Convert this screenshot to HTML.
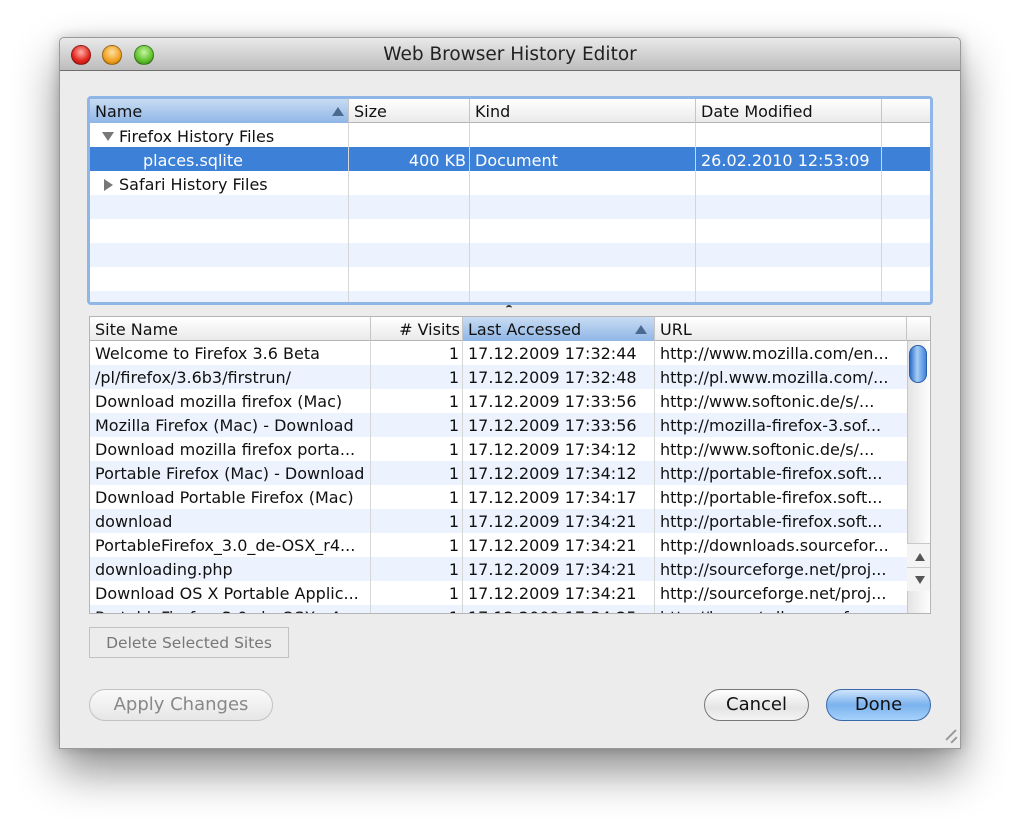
<!DOCTYPE html>
<html><head><meta charset="utf-8"><style>
*{box-sizing:border-box;margin:0;padding:0}
body{width:1020px;height:831px;background:#fff;font-family:"DejaVu Sans","Liberation Sans",sans-serif;font-size:16px;color:#111;position:relative;overflow:hidden}
.win{position:absolute;left:59px;top:37px;width:902px;height:712px;background:#ececec;border:1px solid #9a9a9a;border-radius:5px 5px 0 0;box-shadow:0 22px 45px rgba(0,0,0,.45),0 0 12px rgba(0,0,0,.2)}
.title{position:absolute;left:0;top:0;width:900px;height:33px;background:linear-gradient(#e9e9e9,#bdbdbd);border-bottom:1px solid #6e6e6e;border-radius:5px 5px 0 0;text-align:center;line-height:33px;font-size:18.5px;color:#222}
.dot{position:absolute;top:7px;width:20px;height:20px;border-radius:50%;border:1px solid rgba(0,0,0,.35)}
.a{position:absolute}
.tbl{position:absolute;background:#fff;overflow:hidden}
.hdr{position:absolute;left:0;top:0;height:24px;background:linear-gradient(#fff,#eaeaea);border-bottom:1px solid #b5b5b5;width:100%}
.hc{position:absolute;top:0;height:24px;line-height:25px;padding-left:5px;border-right:1px solid #c5c5c5;overflow:hidden;white-space:nowrap}
.sel{background:linear-gradient(#c8dcf3,#8fb6e6)}
.row{position:absolute;left:0;width:100%;height:24px;line-height:25px;white-space:nowrap}
.c{position:absolute;top:0;height:24px;padding-left:5px;overflow:hidden}
.vl{position:absolute;top:0;bottom:0;width:1px;background:#d6d6d6}
.tri{position:absolute;width:0;height:0}
.btn{position:absolute;text-align:center;font-size:18px}
</style></head><body>
<div class="win">
 <div class="title">Web Browser History Editor
  <div class="dot" style="left:11px;background:radial-gradient(circle at 50% 35%,#ffb0a8,#e0231b 60%,#a0100a)"></div>
  <div class="dot" style="left:42px;background:radial-gradient(circle at 50% 35%,#ffe0a0,#f0a020 60%,#b86a00)"></div>
  <div class="dot" style="left:74px;background:radial-gradient(circle at 50% 35%,#c8f5a0,#5cc02a 60%,#2f7a10)"></div>
 </div>
</div>

<div class="a" style="left:87px;top:96px;width:846px;height:209px;border:3px solid #8fb6e6;border-radius:4px"></div>
<div class="tbl" style="left:90px;top:99px;width:840px;height:203px">
 <div class="row" style="top:48px;background:#3d80d8"></div>
 <div class="row" style="top:96px;background:#edf3fe"></div>
 <div class="row" style="top:144px;background:#edf3fe"></div>
 <div class="row" style="top:192px;background:#edf3fe"></div>
 <div class="vl" style="left:258px"></div><div class="vl" style="left:379px"></div><div class="vl" style="left:605px"></div><div class="vl" style="left:791px"></div>
 <div class="hdr">
  <div class="hc sel" style="left:0;width:259px">Name<span class="tri" style="left:242px;top:8px;border-left:6px solid transparent;border-right:6px solid transparent;border-bottom:9px solid #4a6a90"></span></div>
  <div class="hc" style="left:259px;width:121px">Size</div>
  <div class="hc" style="left:380px;width:226px">Kind</div>
  <div class="hc" style="left:606px;width:186px">Date Modified</div>
 </div>
 <div class="row" style="top:25px"><span class="tri" style="left:12px;top:8px;border-left:6px solid transparent;border-right:6px solid transparent;border-top:9px solid #777"></span><span class="c" style="left:24px">Firefox History Files</span></div>
 <div class="row" style="top:49px;color:#fff"><span class="c" style="left:48px">places.sqlite</span><span class="c" style="left:259px;width:117px;text-align:right">400 KB</span><span class="c" style="left:380px">Document</span><span class="c" style="left:606px">26.02.2010 12:53:09</span></div>
 <div class="row" style="top:73px"><span class="tri" style="left:14px;top:7px;border-top:6px solid transparent;border-bottom:6px solid transparent;border-left:9px solid #777"></span><span class="c" style="left:24px">Safari History Files</span></div>
</div>
<div class="a" style="left:506px;top:305px;width:6px;height:4px;border-top:2px solid #333;border-radius:3px 3px 0 0"></div>

<div class="tbl" style="left:89px;top:316px;width:842px;height:298px;border:1px solid #b5b5b5">
 <div class="row" style="top:48px;background:#edf3fe"></div>
 <div class="row" style="top:96px;background:#edf3fe"></div>
 <div class="row" style="top:144px;background:#edf3fe"></div>
 <div class="row" style="top:192px;background:#edf3fe"></div>
 <div class="row" style="top:240px;background:#edf3fe"></div>
 <div class="row" style="top:288px;background:#edf3fe"></div>
 <div class="vl" style="left:280px"></div><div class="vl" style="left:372px"></div><div class="vl" style="left:564px"></div>
 <div class="hdr">
  <div class="hc" style="left:0;width:281px">Site Name</div>
  <div class="hc" style="left:281px;width:92px;text-align:right;padding-right:2px"># Visits</div>
  <div class="hc sel" style="left:373px;width:192px">Last Accessed<span class="tri" style="left:172px;top:8px;border-left:6px solid transparent;border-right:6px solid transparent;border-bottom:9px solid #4a6a90"></span></div>
  <div class="hc" style="left:565px;width:252px">URL</div>
 </div>
 <div style="position:absolute;left:0;top:24px;width:100%">
  <div class="row" style="top:0"><span class="c" style="left:0;width:280px">Welcome to Firefox 3.6 Beta</span><span class="c" style="left:281px;width:88px;text-align:right">1</span><span class="c" style="left:373px">17.12.2009 17:32:44</span><span class="c" style="left:565px;width:252px">http://www.mozilla.com/en...</span></div>
  <div class="row" style="top:24px"><span class="c" style="left:0;width:280px">/pl/firefox/3.6b3/firstrun/</span><span class="c" style="left:281px;width:88px;text-align:right">1</span><span class="c" style="left:373px">17.12.2009 17:32:48</span><span class="c" style="left:565px;width:252px">http://pl.www.mozilla.com/...</span></div>
  <div class="row" style="top:48px"><span class="c" style="left:0;width:280px">Download mozilla firefox (Mac)</span><span class="c" style="left:281px;width:88px;text-align:right">1</span><span class="c" style="left:373px">17.12.2009 17:33:56</span><span class="c" style="left:565px;width:252px">http://www.softonic.de/s/...</span></div>
  <div class="row" style="top:72px"><span class="c" style="left:0;width:280px">Mozilla Firefox (Mac) - Download</span><span class="c" style="left:281px;width:88px;text-align:right">1</span><span class="c" style="left:373px">17.12.2009 17:33:56</span><span class="c" style="left:565px;width:252px">http://mozilla-firefox-3.sof...</span></div>
  <div class="row" style="top:96px"><span class="c" style="left:0;width:280px">Download mozilla firefox porta...</span><span class="c" style="left:281px;width:88px;text-align:right">1</span><span class="c" style="left:373px">17.12.2009 17:34:12</span><span class="c" style="left:565px;width:252px">http://www.softonic.de/s/...</span></div>
  <div class="row" style="top:120px"><span class="c" style="left:0;width:280px">Portable Firefox (Mac) - Download</span><span class="c" style="left:281px;width:88px;text-align:right">1</span><span class="c" style="left:373px">17.12.2009 17:34:12</span><span class="c" style="left:565px;width:252px">http://portable-firefox.soft...</span></div>
  <div class="row" style="top:144px"><span class="c" style="left:0;width:280px">Download Portable Firefox (Mac)</span><span class="c" style="left:281px;width:88px;text-align:right">1</span><span class="c" style="left:373px">17.12.2009 17:34:17</span><span class="c" style="left:565px;width:252px">http://portable-firefox.soft...</span></div>
  <div class="row" style="top:168px"><span class="c" style="left:0;width:280px">download</span><span class="c" style="left:281px;width:88px;text-align:right">1</span><span class="c" style="left:373px">17.12.2009 17:34:21</span><span class="c" style="left:565px;width:252px">http://portable-firefox.soft...</span></div>
  <div class="row" style="top:192px"><span class="c" style="left:0;width:280px">PortableFirefox_3.0_de-OSX_r4...</span><span class="c" style="left:281px;width:88px;text-align:right">1</span><span class="c" style="left:373px">17.12.2009 17:34:21</span><span class="c" style="left:565px;width:252px">http://downloads.sourcefor...</span></div>
  <div class="row" style="top:216px"><span class="c" style="left:0;width:280px">downloading.php</span><span class="c" style="left:281px;width:88px;text-align:right">1</span><span class="c" style="left:373px">17.12.2009 17:34:21</span><span class="c" style="left:565px;width:252px">http://sourceforge.net/proj...</span></div>
  <div class="row" style="top:240px"><span class="c" style="left:0;width:280px">Download OS X Portable Applic...</span><span class="c" style="left:281px;width:88px;text-align:right">1</span><span class="c" style="left:373px">17.12.2009 17:34:21</span><span class="c" style="left:565px;width:252px">http://sourceforge.net/proj...</span></div>
  <div class="row" style="top:264px"><span class="c" style="left:0;width:280px">PortableFirefox_3.0_de-OSX_r4...</span><span class="c" style="left:281px;width:88px;text-align:right">1</span><span class="c" style="left:373px">17.12.2009 17:34:25</span><span class="c" style="left:565px;width:252px">http://heanet.dl.sourceforg...</span></div>
 </div>
 <div class="a" style="left:817px;top:24px;width:24px;height:274px;background:linear-gradient(90deg,#e4e4e4,#fff);border-left:1px solid #c8c8c8"></div>
 <div class="a" style="left:819px;top:28px;width:18px;height:38px;border-radius:9px;background:linear-gradient(90deg,#2c6fc8,#a8cdf5 45%,#3f86dc);border:1px solid #2a5ea8"></div>
 <div class="a" style="left:817px;top:226px;width:24px;height:48px;border-top:1px solid #c8c8c8;background:#f4f4f4"></div>
 <div class="a" style="left:825px;top:236px;border-left:5px solid transparent;border-right:5px solid transparent;border-bottom:8px solid #555"></div>
 <div class="a" style="left:817px;top:250px;width:24px;height:1px;background:#ccc"></div>
 <div class="a" style="left:825px;top:259px;border-left:5px solid transparent;border-right:5px solid transparent;border-top:8px solid #555"></div>
</div>

<div class="btn" style="left:89px;top:627px;width:200px;height:31px;line-height:31px;border:1px solid #c2c2c2;background:#ececec;color:#777;font-size:15.5px">Delete Selected Sites</div>
<div class="btn" style="left:89px;top:689px;width:184px;height:32px;line-height:30px;border:1px solid #c2c2c2;border-radius:16px;background:linear-gradient(#fafafa,#e6e6e6);color:#888">Apply Changes</div>
<div class="btn" style="left:704px;top:689px;width:105px;height:32px;line-height:30px;border:1px solid #777;border-radius:16px;background:linear-gradient(#fff,#e4e4e4 60%,#f4f4f4);color:#111">Cancel</div>
<div class="btn" style="left:826px;top:689px;width:105px;height:32px;line-height:30px;border:1px solid #3a68a8;border-radius:16px;background:linear-gradient(#cfe4fb,#7ab2ee 50%,#a6d2fb);color:#111">Done</div>
<div class="a" style="left:944px;top:734px;width:14px;height:2px;background:#999;transform:rotate(-45deg)"></div>
<div class="a" style="left:950px;top:739px;width:8px;height:2px;background:#999;transform:rotate(-45deg)"></div>
</body></html>
